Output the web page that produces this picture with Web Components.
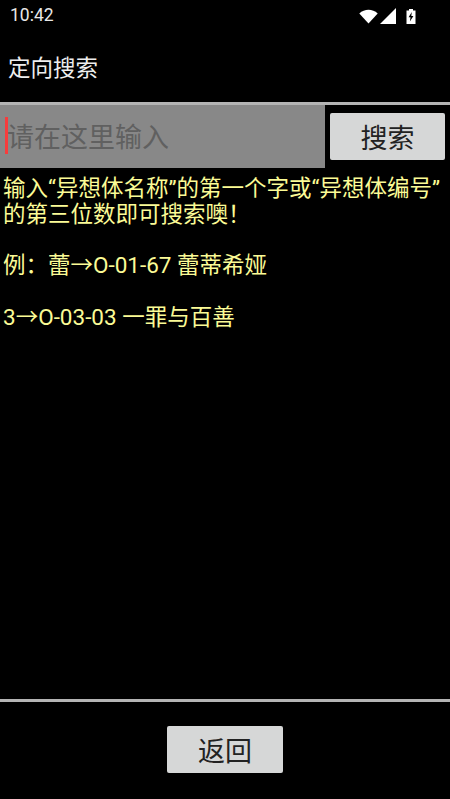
<!DOCTYPE html>
<html lang="zh">
<head>
<meta charset="utf-8">
<style>
  html, body { margin: 0; height: 100%; background: #000; }
  body { font-family: Roboto, "Noto Sans CJK SC", sans-serif; }
</style>
</head>
<body>
<search-page>
  <status-bar slot="status" time="10:42"></status-bar>
  <title-bar slot="title">定向搜索</title-bar>
  <search-row slot="search" placeholder="请在这里输入" action="搜索"></search-row>
  <hint-text slot="hint">
    <div>输入“异想体名称”的第一个字或“异想体编号”的第三位数即可搜索噢！</div>
    <div class="gap">例：蕾→O-01-67 蕾蒂希娅</div>
    <div class="gap">3→O-03-03 一罪与百善</div>
  </hint-text>
  <foot-bar slot="foot">返回</foot-bar>
</search-page>

<script>
///////////////////
// Shared grey android button
class GreyButton extends HTMLElement {
  constructor() {
    super();
    this.attachShadow({mode: 'open'});
    this.shadowRoot.innerHTML = `
      <style>
        :host {
          display: flex; align-items: center; justify-content: center;
          box-sizing: border-box; width: var(--btn-width, 115px); height: 47px;
          background: #d6d7d7; border-radius: 2px;
          color: #222; font: 27px/1 "Noto Sans CJK SC", sans-serif;
        }
      </style>
      <slot></slot>`;
  }
}
customElements.define('grey-button', GreyButton);

///////////////////
// Status bar
class StatusBar extends HTMLElement {
  constructor() {
    super();
    this.attachShadow({mode: 'open'});
    this.shadowRoot.innerHTML = `
      <style>
        :host {
          display: flex; align-items: center; justify-content: space-between;
          height: 31px; padding: 1px 34px 0 10px; box-sizing: border-box;
          color: #e8e8e8; font: 400 17.5px/1 Roboto, sans-serif;
        }
        .icons { display: flex; align-items: center; gap: 2px; }
        svg { display: block; fill: #fff; }
      </style>
      <span>${this.getAttribute('time')}</span>
      <div class="icons">
        <svg width="19" height="15" viewBox="0 0 19 15"><path d="M0.3 4.6 C5.5 -0.4 13.5 -0.4 18.7 4.6 L9.5 14.5 Z"/></svg>
        <svg width="16" height="16" viewBox="0 0 16 16"><path d="M16 0 V16 H0 Z"/></svg>
        <svg width="10" height="15" viewBox="0 0 10 15" style="margin-left:8px">
          <path fill-rule="evenodd" d="M3 0 H7 V1.5 H9.5 V15 H0.5 V1.5 H3 Z M5.8 3 L2.6 8.3 H4.5 L3.9 12.5 L7.4 7 H5.3 Z"/>
        </svg>
      </div>`;
  }
}
customElements.define('status-bar', StatusBar);

///////////////////
// Title
class TitleBar extends HTMLElement {
  constructor() {
    super();
    this.attachShadow({mode: 'open'});
    this.shadowRoot.innerHTML = `
      <style>
        :host {
          display: flex; align-items: center; box-sizing: border-box;
          height: 74px; padding: 0 0 1px 8px;
          color: #eee; font: 22.5px/1 "Noto Sans CJK SC", sans-serif;
          border-bottom: 3px solid #b4b4b4;
        }
      </style>
      <slot></slot>`;
  }
}
customElements.define('title-bar', TitleBar);

///////////////////
// Input + button
class SearchRow extends HTMLElement {
  constructor() {
    super();
    this.attachShadow({mode: 'open'});
    this.shadowRoot.innerHTML = `
      <style>
        :host { display: flex; height: 63px; }
        .field {
          position: relative; width: 325px; display: flex; align-items: center;
          padding: 0 0 2px 7px; box-sizing: border-box; background: #888;
          color: #606060; font: 27px/1 "Noto Sans CJK SC", sans-serif;
        }
        .caret {
          position: absolute; left: 5px; top: 12px; width: 3px; height: 37px; background: #f83c3c;
        }
        .right { flex: 1; padding: 8px 5px 0; }
      </style>
      <div class="field"><span class="caret"></span><span>${this.getAttribute('placeholder')}</span></div>
      <div class="right"><grey-button>${this.getAttribute('action')}</grey-button></div>`;
  }
}
customElements.define('search-row', SearchRow);

///////////////////
// Yellow hint text
class HintText extends HTMLElement {
  constructor() {
    super();
    this.attachShadow({mode: 'open'});
    this.shadowRoot.innerHTML = `
      <style>
        :host {
          display: block; padding: 8px 4px 0 3px;
          color: #fbfb96; font: 22.5px/25.8px Roboto, "Noto Sans CJK SC", sans-serif;
        }
        ::slotted(.gap) { margin-top: 25.8px; }
      </style>
      <slot></slot>`;
  }
}
customElements.define('hint-text', HintText);

///////////////////
// Bottom bar
class FootBar extends HTMLElement {
  constructor() {
    super();
    this.attachShadow({mode: 'open'});
    this.shadowRoot.innerHTML = `
      <style>
        :host {
          display: flex; justify-content: center; box-sizing: border-box;
          height: 100px; padding-top: 24px; border-top: 3px solid #b4b4b4;
          --btn-width: 116px;
        }
      </style>
      <grey-button><slot></slot></grey-button>`;
  }
}
customElements.define('foot-bar', FootBar);

///////////////////
// Page frame
class SearchPage extends HTMLElement {
  constructor() {
    super();
    this.attachShadow({mode: 'open'});
    this.shadowRoot.innerHTML = `
      <style>
        :host { display: flex; flex-direction: column; height: 799px; background: #000; overflow: hidden; }
        .grow { flex: 1; min-height: 0; }
      </style>
      <slot name="status"></slot>
      <slot name="title"></slot>
      <slot name="search"></slot>
      <div class="grow"><slot name="hint"></slot></div>
      <slot name="foot"></slot>`;
  }
}
customElements.define('search-page', SearchPage);
</script>
</body>
</html>
